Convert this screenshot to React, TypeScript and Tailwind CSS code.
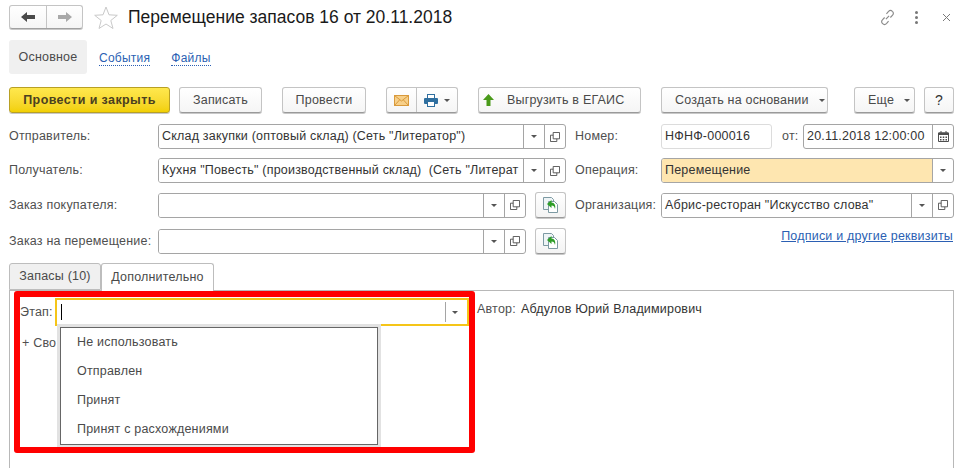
import type { ReactNode } from 'react'

const FONT = "font-['Liberation_Sans',Arial,sans-serif]"

function Caret() {
  return <svg width="6" height="3" viewBox="0 0 6 3"><path d="M0 0h6L3 3z" fill="#555" /></svg>
}

function OpenIcon() {
  return (
    <svg width="10" height="10" viewBox="0 0 11 11" fill="none" stroke="#4d4d4d">
      <path d="M3.500.5h7v7h-7z" />
      <path d="M3.500 3.500h-3v7h7v-3" />
    </svg>
  )
}

function BackDocIcon() {
  return (
    <svg width="18" height="18" viewBox="0 0 18 18" fill="none">
      <path d="M1.500 1.500h8l2 2v10h-10z" fill="#eef4f6" stroke="#7d9aa3" />
      <path d="M6.500 5.500h6l3 3v8h-9z" fill="#fff" stroke="#7d9aa3" />
      <path d="M9.500 4 5 8l4.500 4V9.500c2 0 3 1 3.500 3.500 1-3.500-.5-6.500-3.500-6.500z" fill="#2f9e28" />
    </svg>
  )
}

function Btn({ w, children, className = '' }: { w: string; children: ReactNode; className?: string }) {
  return (
    <div className={`flex h-[26px] items-center justify-center gap-[9px] rounded-[3px] border border-[#c4c4c4] border-b-[#9a9a9a] bg-gradient-to-b from-white to-[#f5f5f5] text-[12.5px] tracking-[0.2px] text-[#4a4a4a] shadow-[0_1px_0_#c8c8c8] ${w} ${className}`}>
      {children}
    </div>
  )
}

function Field({ w, text, drop = true, open = true, bg = 'bg-white' }: { w: string; text?: string; drop?: boolean; open?: boolean; bg?: string }) {
  return (
    <div className={`flex h-[25px] shrink-0 items-stretch overflow-hidden rounded-[3px] border border-[#a5a5a5] bg-white ${w}`}>
      <div className={`min-w-0 flex-1 ${bg} flex items-center pl-[3px] text-[12.5px] tracking-[0.2px] whitespace-pre text-[#333]`}>
        {text}
      </div>
      {drop && (
        <div className="flex w-[21px] items-center justify-center border-l border-[#a5a5a5]"><Caret /></div>
      )}
      {open && (
        <div className="flex w-[21px] items-center justify-center border-l border-[#a5a5a5]"><OpenIcon /></div>
      )}
    </div>
  )
}

function Label({ w, children }: { w: string; children: ReactNode }) {
  return <div className={`shrink-0 text-[12.5px] tracking-[0.2px] whitespace-nowrap text-[#4f4f4f] ${w}`}>{children}</div>
}

function SideButton() {
  return (
    <div className="ml-[9px] flex h-[26px] w-[31px] shrink-0 items-center justify-center rounded-[3px] border border-[#c4c4c4] border-b-[#9a9a9a] bg-gradient-to-b from-white to-[#f3f3f3] shadow-[0_1px_0_#c8c8c8]">
      <BackDocIcon />
    </div>
  )
}

export default function App() {
  return (
    <div className={`relative h-[468px] w-[966px] overflow-hidden bg-white ${FONT}`}>
      {/* заголовок */}
      <div className="flex h-[24px] items-center pt-0 pl-[9px] mt-[5px]">
        <div className="flex h-[24px] w-[74px] overflow-hidden rounded-[3px] border border-[#c4c4c4] border-b-[#a0a0a0] bg-gradient-to-b from-white to-[#f5f5f5] shadow-[0_1px_0_#c8c8c8]">
          <div className="flex w-[37px] items-center justify-center border-r border-[#c4c4c4]">
            <svg width="14" height="10" viewBox="0 0 14 10"><path d="M0 5l6-5v3h8v4H6v3z" fill="#4a4a4a" /></svg>
          </div>
          <div className="flex flex-1 items-center justify-center">
            <svg width="14" height="10" viewBox="0 0 14 10"><path d="M14 5L8 0v3H0v4h8v3z" fill="#a9a9a9" /></svg>
          </div>
        </div>
        <svg className="ml-[11px]" width="24" height="23" viewBox="0 0 24 23" fill="none">
          <path d="M12 1l3 7.800 8.300.5-6.500 5.200 2.200 8-7-4.500-7 4.500 2.200-8L.7 9.300 9 8.800z" stroke="#c9c9c9" fill="#fff" />
        </svg>
        <div className="ml-[10px] text-[17.5px] whitespace-nowrap text-[#1a1a1a]">Перемещение запасов 16 от 20.11.2018</div>
        <div className="ml-auto flex items-center pr-[15px]">
          <svg width="17" height="17" viewBox="0 0 16 16" fill="none" stroke="#8a8a8a" strokeWidth="1.100">
            <path d="M6.500 9.500l3-3M7 4.500l2-2.200c1-1 2.600-1 3.600-.1 1.200 1 1.200 2.600.2 3.600L10.700 8M9 11.500l-2 2.200c-1 1-2.600 1-3.600.1-1.200-1-1.200-2.600-.2-3.600L5.300 8" />
          </svg>
          <div className="ml-[19px] flex flex-col gap-[2px]">
            <i className="block h-[3px] w-[3px] rounded-full bg-[#777]" />
            <i className="block h-[3px] w-[3px] rounded-full bg-[#777]" />
            <i className="block h-[3px] w-[3px] rounded-full bg-[#777]" />
          </div>
          <svg className="ml-[24px]" width="9" height="9" viewBox="0 0 9 9" stroke="#7a7a7a"><path d="M1 1l7 7M8 1l-7 7" /></svg>
        </div>
      </div>

      {/* разделы */}
      <div className="mt-[11px] flex h-[34px] pl-[9px] text-[12px] tracking-[0.25px]">
        <div className="flex w-[78px] items-center justify-center rounded-[3px] bg-[#f0f0f0] text-[12.5px] tracking-[0.2px] text-[#4a4a4a]">Основное</div>
        <div className="ml-[12px] flex items-center pt-[2px] text-[#2b5fb3]"><span className="border-b border-dotted border-[#2b5fb3] leading-[14px]">События</span></div>
        <div className="ml-[21px] flex items-center pt-[2px] text-[#2b5fb3]"><span className="border-b border-dotted border-[#2b5fb3] leading-[14px]">Файлы</span></div>
      </div>

      {/* командная панель */}
      <div className="mt-[13px] flex pl-[9px]">
        <div className="flex h-[26px] w-[161px] items-center justify-center rounded-[3px] border border-[#b8a024] bg-gradient-to-b from-[#ffe84d] to-[#f2d000] text-[12.5px] font-bold tracking-[0.4px] text-[#4a4020] shadow-[0_1px_0_#c8c8c8]">Провести и закрыть</div>
        <Btn w="w-[83px]" className="ml-[9px]">Записать</Btn>
        <Btn w="w-[84px]" className="ml-[20px]">Провести</Btn>
        <div className="ml-[20px] flex h-[26px] w-[72px] rounded-[3px] border border-[#c4c4c4] border-b-[#9a9a9a] bg-gradient-to-b from-white to-[#f5f5f5] shadow-[0_1px_0_#c8c8c8]">
          <div className="flex w-[30px] items-center justify-center border-r border-[#c4c4c4]">
            <svg width="15" height="11" viewBox="0 0 15 11"><rect x=".5" y=".5" width="14" height="10" fill="#f7d08a" stroke="#d99a3c" /><path d="M.5.5l7 5.500 7-5.500M.5 10.500l5-5.500M14.500 10.500l-5-5.500" fill="none" stroke="#d99a3c" /></svg>
          </div>
          <div className="flex flex-1 items-center justify-center gap-[6px]">
            <svg width="14" height="13" viewBox="0 0 14 13"><rect x="3.500" y=".5" width="7" height="4" fill="#fff" stroke="#2f6f9f" /><rect x="0" y="4" width="14" height="6" rx="1" fill="#2f6f9f" /><rect x="3.500" y="7.500" width="7" height="5" fill="#fff" stroke="#2f6f9f" /></svg>
            <Caret />
          </div>
        </div>
        <Btn w="w-[163px]" className="ml-[20px] !justify-start pl-[3px]">
          <svg className="ml-[1px]" width="11" height="12" viewBox="0 0 11 12"><path d="M5.500 0L11 6H7.500v6h-4V6H0z" fill="#4a9a1a" /></svg>
          <span className="ml-[4px]">Выгрузить в ЕГАИС</span>
        </Btn>
        <Btn w="w-[167px]" className="ml-[20px] !justify-start pl-[13px] !gap-[10px]">Создать на основании <Caret /></Btn>
        <Btn w="w-[61px]" className="ml-[26px] !justify-start pl-[13px] !gap-[10px]">Еще <Caret /></Btn>
        <Btn w="w-[30px]" className="ml-[9px] !text-[14px] !text-[#333]">?</Btn>
      </div>

      {/* реквизиты */}
      <div className="mt-[11px] flex items-center pl-[9px]">
        <Label w="w-[149px]">Отправитель:</Label>
        <Field w="w-[408px]" text={'Склад закупки (оптовый склад) (Сеть "Литератор")'} />
        <Label w="ml-[9px] w-[86px]">Номер:</Label>
        <div className="flex h-[25px] w-[111px] items-center rounded-[3px] border border-[#dcdcdc] pl-[3px] text-[12.5px] tracking-[0.2px] text-[#333]">НФНФ-000016</div>
        <Label w="ml-[10px] w-[21px]">от:</Label>
        <div className="flex h-[25px] w-[151px] rounded-[3px] border border-[#a5a5a5] text-[12.5px] tracking-[0.2px] whitespace-nowrap text-[#333]">
          <div className="flex flex-1 items-center pl-[3px]">20.11.2018 12:00:00</div>
          <div className="flex w-[21px] items-center justify-center border-l border-[#a5a5a5]">
            <svg width="11" height="11" viewBox="0 0 11 11"><path d="M.5 2h10v8.500H.5z" fill="none" stroke="#4d4d4d" /><path d="M.5 1.500h10V4H.5zM2.500 0h1v2h-1zM7.500 0h1v2h-1z" fill="#4d4d4d" /><path d="M2 5.500h1.500V7H2zM4.750 5.500h1.500V7h-1.500zM7.500 5.500H9V7H7.500zM2 8h1.500v1.500H2zM4.750 8h1.500v1.500h-1.500zM7.500 8H9v1.500H7.500z" fill="#4d4d4d" /></svg>
          </div>
        </div>
      </div>

      <div className="mt-[9px] flex items-center pl-[9px]">
        <Label w="w-[149px]">Получатель:</Label>
        <Field w="w-[408px]" text={'Кухня "Повесть" (производственный склад)  (Сеть "Литерат'} />
        <Label w="ml-[9px] w-[86px]">Операция:</Label>
        <Field w="w-[293px]" text="Перемещение" open={false} bg="bg-[#fee6b0]" />
      </div>

      <div className="mt-[9px] flex items-center pl-[9px]">
        <Label w="w-[149px]">Заказ покупателя:</Label>
        <Field w="w-[368px]" />
        <SideButton />
        <Label w="ml-[9px] w-[86px]">Организация:</Label>
        <Field w="w-[293px]" text={'Абрис-ресторан "Искусство слова"'} />
      </div>

      <div className="mt-[10px] flex items-center pl-[9px]">
        <Label w="w-[149px]">Заказ на перемещение:</Label>
        <Field w="w-[368px]" />
        <SideButton />
        <div className="-mt-[1px] ml-auto self-start pr-[13px] text-[12.5px] tracking-[0.2px] text-[#2b5fb3] underline">Подписи и другие реквизиты</div>
      </div>

      {/* вкладки */}
      <div className="mt-[9px] flex pl-[9px] text-[12.5px] tracking-[0.2px] text-[#4a4a4a]">
        <div className="flex h-[27px] w-[92px] items-center justify-center rounded-t-[3px] border border-[#bdbdbd] bg-[#f0f0f0]">Запасы (10)</div>
        <div className="-mb-px flex h-[28px] w-[113px] items-center justify-center rounded-t-[3px] border border-b-0 border-[#bdbdbd] bg-white">Дополнительно</div>
      </div>

      <div className="ml-[9px] h-[180px] w-[945px] border border-b-0 border-[#b8b8b8] pt-[7px] text-[12.5px] tracking-[0.2px]">
        <div className="flex items-center pl-[10px]">
          <div className="w-[35px] shrink-0 text-[#4f4f4f]">Этап:</div>
          <div className="flex h-[28px] w-[414px] shrink-0 items-center border-2 border-[#f5c518]">
            <div className="ml-[4px] h-[16px] w-px bg-black" />
            <div className="ml-auto flex h-[20px] w-[22px] items-center justify-center border-l border-[#a5a5a5] pr-[3px]"><Caret /></div>
          </div>
          <div className="ml-[8px] flex gap-[5px] self-start pt-[2px] text-[#333]">
            <span className="text-[#4f4f4f]">Автор:</span>
            <span>Абдулов Юрий Владимирович</span>
          </div>
        </div>
        <div className="mt-[8px] pl-[12px] text-[#4f4f4f]">+ Сво</div>
      </div>

      {/* выпадающий список */}
      <div className="absolute top-[324px] left-[57px] w-[324px] border-[3px] border-[#e2e2e2]">
        <div className="border border-[#666] bg-white text-[12.5px] tracking-[0.2px] text-[#4a4a4a]">
          {['Не использовать', 'Отправлен', 'Принят', 'Принят с расхождениями'].map((item) => (
            <div key={item} className="flex h-[29px] items-center pl-[16px]">{item}</div>
          ))}
        </div>
      </div>

      {/* красная рамка */}
      <div className="pointer-events-none absolute top-[291px] left-[14px] h-[162px] w-[461px] rounded-[3px] border-[6px] border-[#ff0000]" />
    </div>
  )
}
